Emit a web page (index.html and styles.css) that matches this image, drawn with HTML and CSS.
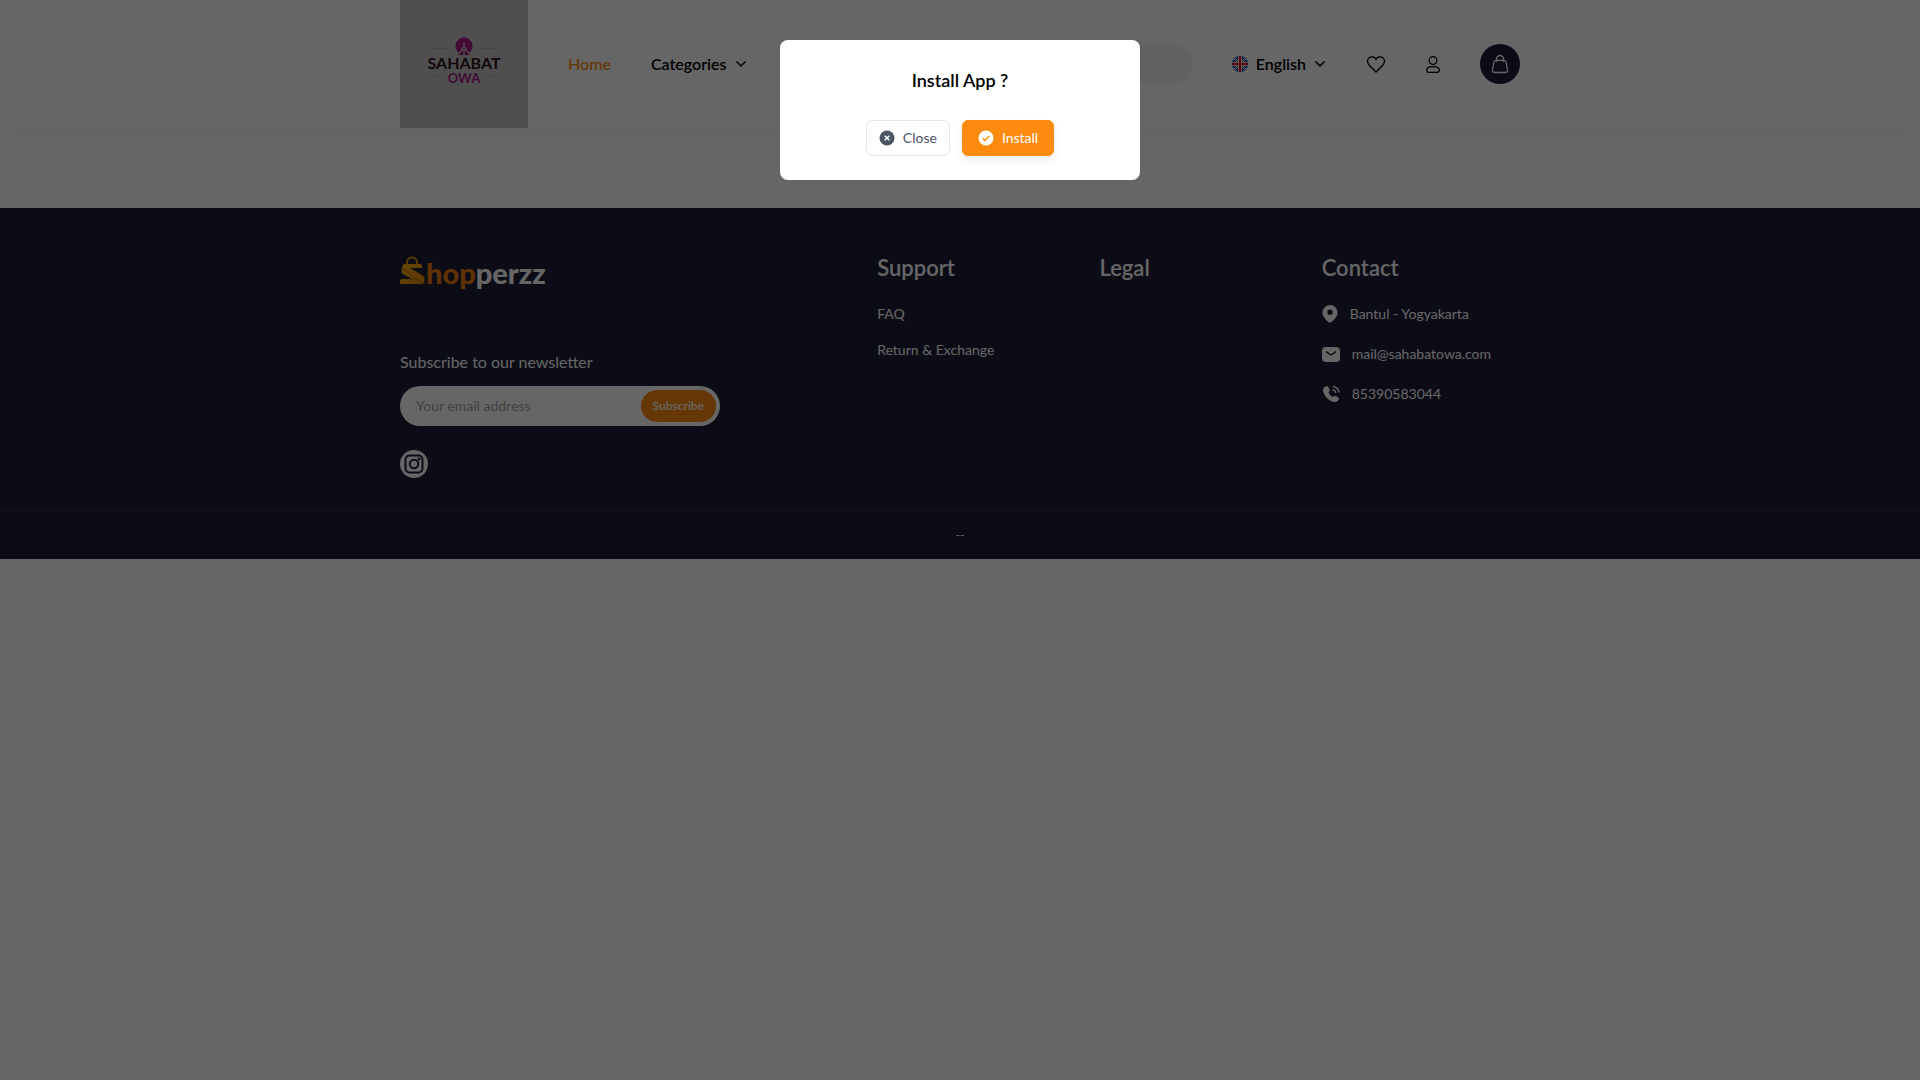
FILE: index.html
```html
<!DOCTYPE html>
<html lang="en">
<head>
  <meta charset="UTF-8" />
  <meta name="viewport" content="width=device-width, initial-scale=1.0" />
  <title>Sahabat Owa</title>
  <link rel="stylesheet" href="styles.css">
</head>
<body>
  <header class="header">
    <div class="container header-row">
      <a href="#" class="logo" aria-label="Sahabat Owa">
        <svg viewBox="0 0 128 128">
          <path d="M28 48.500h24M76 48.500h24M28 75.500h14M86 75.500h14" stroke="#b5b5b5"/>
          <circle cx="64" cy="46" r="8.500" fill="#a5187f"/>
          <path d="M64 45l-6 10h12z" fill="#a5187f"/>
          <circle cx="64" cy="43.500" r="1.200" fill="#c5c5c5"/>
          <path d="M64 46l-5 8M64 46l5 8M62 50h4M64 51v4" stroke="#c5c5c5" stroke-width="1.300" fill="none"/>
          <text x="64" y="69" class="logo-name">SAHABAT</text>
          <text x="64" y="83" class="logo-sub">OWA</text>
        </svg>
      </a>
      <nav class="nav">
        <a href="#" class="nav-link active">Home</a>
        <button type="button" class="nav-link">Categories
          <svg class="chevron" viewBox="0 0 12 12"><path d="M1.500 3.500L6 8l4.500-4.500"/></svg>
        </button>
      </nav>
      <input type="search" class="search" aria-label="Search">
      <button type="button" class="nav-link language">
        <svg class="flag" viewBox="0 0 16 16">
          <clipPath id="flag-round"><circle cx="8" cy="8" r="8"/></clipPath>
          <g clip-path="url(#flag-round)">
            <path d="M0 0h16v16H0z" fill="#0052b4"/>
            <path d="M0 0l16 16M16 0L0 16" stroke="#f0f0f0" stroke-width="2"/>
            <path d="M0 0l16 16M16 0L0 16" stroke="#d80027" stroke-width=".8"/>
            <path d="M8 0v16M0 8h16" stroke="#f0f0f0" stroke-width="4"/>
            <path d="M8 0v16M0 8h16" stroke="#d80027" stroke-width="2"/>
          </g>
        </svg>
        <span>English</span>
        <svg class="chevron" viewBox="0 0 12 12"><path d="M1.500 3.500L6 8l4.500-4.500"/></svg>
      </button>
      <div class="actions">
        <a href="#" class="action" aria-label="Wishlist">
          <svg viewBox="0 0 20 20"><path d="M10 18L3.200 11.200C.8 8.600 1 5.400 3.200 3.700c2.200-1.500 5.200-1 6.800 1.500 1.600-2.500 4.600-3 6.800-1.500 2.200 1.700 2.400 4.900 0 7.500z"/></svg>
        </a>
        <a href="#" class="action" aria-label="Account">
          <svg viewBox="0 0 20 20"><circle cx="10" cy="6.500" r="3.800"/><path d="M10 12.700c4 0 6.300 1.200 6.300 3.400 0 1.400-.7 2.200-2.200 2.200H5.900c-1.500 0-2.200-.8-2.200-2.200 0-2.200 2.300-3.400 6.300-3.400z"/></svg>
        </a>
        <a href="#" class="cart" aria-label="Cart">
          <svg viewBox="0 0 20 20"><path d="M5.800 6.300h8.400c1 0 1.500.6 1.700 1.500l1.600 7.700c.3 2-.6 3-2.200 3H4.700c-1.600 0-2.500-1-2.200-3l1.600-7.700c.2-.9.700-1.500 1.700-1.500zM6.500 8V5a3.500 3.500 0 0 1 7 0v3"/></svg>
        </a>
      </div>
    </div>
  </header>

  <main class="main"></main>

  <footer class="footer">
    <div class="container footer-grid">
      <div>
        <a href="#" class="brand" aria-label="Shopperzz">
          <svg viewBox="0 0 146 38">
            <defs>
              <linearGradient id="bag" x1="0" y1="0" x2="1" y2="1">
                <stop offset="0" stop-color="#fcb415"/>
                <stop offset="1" stop-color="#e88a08"/>
              </linearGradient>
            </defs>
            <path d="M7 9V6.500a5 5 0 0 1 10 0V9" fill="none" stroke="#d89a10" stroke-width="2"/>
            <path d="M4.500 8H20q2 0 2 2v2H10l12 7q3 2 2.500 5.500-.5 3.500-4 3.500H0v-3q0-2 2-2h10L3 18q-2-1-1.500-4l1-4q.5-2 2-2z" fill="url(#bag)"/>
            <path d="M2 12l20 15M10 23h6l7 5" stroke="#b26c05" stroke-width="1" fill="none"/>
            <text x="26" y="28" class="brand-name">hop<tspan fill="#fff">perzz</tspan></text>
          </svg>
        </a>
        <form class="newsletter">
          <label for="email">Subscribe to our newsletter</label>
          <div class="newsletter-box">
            <input type="email" id="email" placeholder="Your email address">
            <button type="button">Subscribe</button>
          </div>
        </form>
        <a href="#" class="social" aria-label="Instagram">
          <svg viewBox="0 0 20 20"><rect x="1.500" y="1.500" width="17" height="17" rx="4"/><circle cx="10" cy="10" r="4.200"/><circle cx="15" cy="5" r=".6"/></svg>
        </a>
      </div>
      <div>
        <h4>Support</h4>
        <ul class="links">
          <li><a href="#">FAQ</a></li>
          <li><a href="#">Return &amp; Exchange</a></li>
        </ul>
      </div>
      <div>
        <h4>Legal</h4>
      </div>
      <div>
        <h4>Contact</h4>
        <ul class="contact">
          <li>
            <svg class="pin" viewBox="0 0 16 18"><path fill-rule="evenodd" d="M8 0a7.500 7.500 0 0 1 7.500 7.600c0 4-3.500 7.400-6.100 9.500a2.200 2.200 0 0 1-2.800 0C4 15 .5 11.600.5 7.600A7.500 7.500 0 0 1 8 0zm0 4.500a2.700 2.700 0 1 0 0 5.400 2.700 2.700 0 0 0 0-5.400z"/></svg>
            <span>Bantul - Yogyakarta</span>
          </li>
          <li>
            <svg viewBox="0 0 18 18"><rect y="2" width="18" height="15" rx="4"/><path d="M4 6.500l3.500 2.700q1.500 1 3 0L14 6.500" class="cut"/></svg>
            <a href="#">mail@sahabatowa.com</a>
          </li>
          <li>
            <svg viewBox="0 0 18 18"><path d="M4.300 1.200c.9-.3 1.600 0 2 .8l1.300 2.400c.4.800.2 1.400-.3 2-.8.900-.8 1.300-.1 2.400a10 10 0 0 0 2.200 2.400c1 .7 1.500.7 2.300 0 .7-.6 1.300-.7 2-.3l2.500 1.500c.8.500 1 1.200.6 2-.8 1.900-2.700 3-4.900 2.600C6.500 15.800 1.800 10.500 1 5.400.700 3.500 2.200 1.800 4.300 1.200z"/><path d="M10.500 4.700a4 4 0 0 1 3.300 3.300M11 1.500a7 7 0 0 1 6 6" class="wave"/></svg>
            <a href="#">85390583044</a>
          </li>
        </ul>
      </div>
    </div>
    <p class="copyright">--</p>
  </footer>

  <div class="overlay">
    <div class="modal" role="dialog" aria-labelledby="install-title">
      <h3 id="install-title">Install App ?</h3>
      <div class="modal-buttons">
        <button type="button" class="btn btn-close">
          <svg viewBox="0 0 16 16"><circle cx="8" cy="8" r="7.500"/><path d="M5.700 5.700l4.600 4.600M10.300 5.700l-4.600 4.600"/></svg>
          Close
        </button>
        <button type="button" class="btn btn-install">
          <svg viewBox="0 0 16 16"><circle cx="8" cy="8" r="7.500"/><path d="M4.800 8.200l2.200 2.200 4.300-4.500"/></svg>
          Install
        </button>
      </div>
    </div>
  </div>
</body>
</html>
```

FILE: styles.css
```css
* {
  box-sizing: border-box;
  margin: 0;
  padding: 0;
}
body {
  font-family: Lato, sans-serif;
  font-size: 14px;
  line-height: 20px;
  color: #000;
  background: #fff;
}
a {
  color: inherit;
  text-decoration: none;
}
ul {
  list-style: none;
}
button, input {
  font: inherit;
  border: none;
  outline: none;
}
button {
  cursor: pointer;
  background: none;
}
svg {
  display: block;
  flex-shrink: 0;
}
.container {
  max-width: 1120px;
  margin: 0 auto;
}

/* header */
.header {
  box-shadow: 0 4px 40px rgba(0, 0, 0, 0.04);
}
.header-row {
  display: flex;
  align-items: center;
  gap: 40px;
}
.logo {
  background: #c5c5c5;
}
.logo svg {
  width: 128px;
  height: 128px;
}
.logo-name, .logo-sub {
  font-weight: 700;
  text-anchor: middle;
}
.logo-name {
  font-size: 16px;
  fill: #2b1118;
}
.logo-sub {
  font-size: 13px;
  fill: #a5187f;
}
.nav {
  display: flex;
  gap: 40px;
}
.nav-link {
  display: flex;
  align-items: center;
  gap: 8px;
  font-size: 16px;
  font-weight: 600;
  line-height: 24px;
}
.nav-link.active {
  color: #fd8b0f;
}
.chevron {
  width: 12px;
  height: 12px;
  fill: none;
  stroke: #000;
  stroke-width: 1.5;
}
.search {
  flex: 1;
  min-width: 0;
  height: 40px;
  padding: 0 16px;
  border-radius: 20px;
  background: #f0f7f5;
}
.flag {
  width: 16px;
  height: 16px;
}
.actions {
  display: flex;
  align-items: center;
  gap: 37px;
}
.action svg, .cart svg {
  width: 20px;
  height: 20px;
  fill: none;
  stroke: #000;
  stroke-width: 1.3;
}
.cart {
  display: flex;
  align-items: center;
  justify-content: center;
  width: 40px;
  height: 40px;
  border-radius: 50%;
  background: #1f1f39;
}
.cart svg {
  stroke: #fff;
}
.main {
  padding: 40px 0;
}

/* footer */
.footer {
  color: #fff;
  background: #1f1f39;
  position: relative;
}
.footer-grid {
  display: grid;
  grid-template-columns: 16fr 7fr 7fr 7fr;
  gap: 24px;
  padding: 48px 0 32px;
}
.brand svg {
  width: 146px;
  height: 38px;
}
.brand-name {
  font-size: 29px;
  font-weight: 900;
  fill: #ee7a08;
}
.newsletter label {
  display: block;
  margin: 56px 0 12px;
  font-size: 16px;
  line-height: 24px;
}
.newsletter-box {
  display: flex;
  max-width: 320px;
  height: 40px;
  padding: 4px 4px 4px 16px;
  border-radius: 20px;
  background: #fff;
}
.newsletter-box input {
  flex: 1;
  min-width: 0;
  background: none;
}
.newsletter-box input::placeholder {
  color: #a0a3ad;
}
.newsletter-box button {
  padding: 0 12px;
  border-radius: 16px;
  font-size: 12px;
  font-weight: 600;
  color: #fff;
  background: #fd8b0f;
}
.social {
  display: flex;
  align-items: center;
  justify-content: center;
  width: 28px;
  height: 28px;
  margin-top: 24px;
  border-radius: 50%;
  background: #fff;
}
.social svg {
  width: 20px;
  height: 20px;
  fill: none;
  stroke: #1f1f39;
  stroke-width: 2;
}
.footer h4 {
  margin-bottom: 24px;
  font-size: 22px;
  font-weight: 600;
  line-height: 24px;
}
.links {
  display: grid;
  gap: 16px;
}
.contact {
  display: grid;
  gap: 20px;
}
.contact li {
  display: flex;
  align-items: center;
  gap: 12px;
}
.contact svg {
  width: 18px;
  height: 18px;
  fill: #fff;
}
.contact .pin {
  width: 16px;
}
.contact .cut, .contact .wave {
  fill: none;
  stroke: #1f1f39;
  stroke-width: 1.5;
}
.contact .wave {
  stroke: #fff;
}
.copyright {
  padding: 14px 0;
  border-top: 1px solid #313149;
  font-size: 12px;
  text-align: center;
}

/* install dialog */
.overlay {
  position: fixed;
  inset: 0;
  display: flex;
  align-items: flex-start;
  justify-content: center;
  padding: 40px 16px;
  background: rgba(0, 0, 0, 0.6);
}
.modal {
  width: 100%;
  max-width: 360px;
  padding: 28px 24px 24px;
  border-radius: 8px;
  text-align: center;
  background: #fff;
}
.modal h3 {
  margin-bottom: 28px;
  font-size: 18px;
  font-weight: 600;
  line-height: 24px;
}
.modal-buttons {
  display: flex;
  justify-content: center;
  gap: 12px;
}
.btn {
  display: flex;
  align-items: center;
  gap: 8px;
  height: 36px;
  padding: 0 12px;
  border: 1px solid #e5e7eb;
  border-radius: 6px;
}
.btn svg {
  width: 16px;
  height: 16px;
}
.btn path {
  fill: none;
  stroke-width: 1.5;
}
.btn-close {
  color: #4b5563;
}
.btn-close circle {
  fill: #4b5563;
}
.btn-close path {
  stroke: #fff;
}
.btn-install {
  padding: 0 15px;
  border-color: #fd8b0f;
  color: #fff;
  background: #fd8b0f;
  box-shadow: 0 4px 8px rgba(0, 0, 0, 0.08);
}
.btn-install circle {
  fill: #fff;
}
.btn-install path {
  stroke: #fd8b0f;
}
```
